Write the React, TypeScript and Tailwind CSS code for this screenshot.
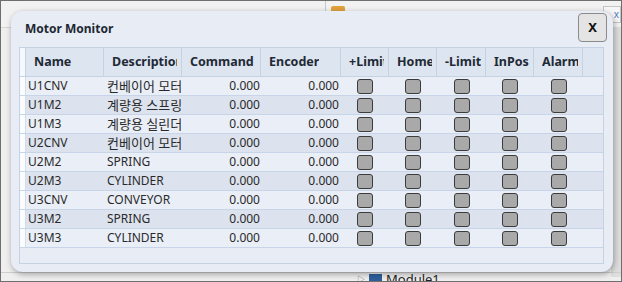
import React from "react";

type Motor = { name: string; desc: string; cmd: string; enc: string };

const motors: Motor[] = [
  { name: "U1CNV", desc: "컨베이어 모터", cmd: "0.000", enc: "0.000" },
  { name: "U1M2", desc: "계량용 스프링", cmd: "0.000", enc: "0.000" },
  { name: "U1M3", desc: "계량용 실린더", cmd: "0.000", enc: "0.000" },
  { name: "U2CNV", desc: "컨베이어 모터", cmd: "0.000", enc: "0.000" },
  { name: "U2M2", desc: "SPRING", cmd: "0.000", enc: "0.000" },
  { name: "U2M3", desc: "CYLINDER", cmd: "0.000", enc: "0.000" },
  { name: "U3CNV", desc: "CONVEYOR", cmd: "0.000", enc: "0.000" },
  { name: "U3M2", desc: "SPRING", cmd: "0.000", enc: "0.000" },
  { name: "U3M3", desc: "CYLINDER", cmd: "0.000", enc: "0.000" },
];

const headers = [
  { label: "Name", w: "w-[78px]" },
  { label: "Description", w: "w-[78px]" },
  { label: "Command", w: "w-[79px]" },
  { label: "Encoder", w: "w-[80px]" },
  { label: "+Limit", w: "w-[48px]" },
  { label: "Home", w: "w-[48px]" },
  { label: "-Limit", w: "w-[49px]" },
  { label: "InPos", w: "w-[48px]" },
  { label: "Alarm", w: "w-[49px]" },
];

const flagWidths = ["w-[48px]", "w-[48px]", "w-[49px]", "w-[48px]", "w-[49px]"];

const isHangul = (s: string) => /[가-힣]/.test(s);

const Lamp = () => (
  <div className="w-[16px] h-[15px] rounded-[3px] bg-[#a9a9a9] border border-[#3c3c3c]" />
);

const App = () => {
  return (
    <div
      className="relative w-[622px] h-[282px] overflow-hidden bg-[#efefef] border border-[#6e6e6e]"
      style={{ fontFamily: '"Noto Sans", "Noto Sans CJK KR", sans-serif' }}
    >
      {/* app behind the dialog */}
      <div className="absolute left-0 top-0 w-full h-[27px] bg-[#f2f2f2] border-b border-[#d4d4d4]" />
      <div className="absolute left-[324px] top-0 w-px h-[27px] bg-[#c8c8c8]" />
      <div className="absolute left-[330px] top-[5px] w-[14px] h-[6px] rounded-t-[2px] bg-[#e0a13a]" />
      <div className="absolute right-0 top-[5px] w-[18px] h-[17px] border border-[#c4c4c4] bg-[#f7f7f7] text-[10px] leading-[14px] text-[#4a7bc4] text-right pr-[1px]">
        x
      </div>
      <div className="absolute right-0 top-[26px] w-[10px] h-[250px] bg-[#dedede]" />
      <div className="absolute left-0 bottom-[8px] w-full h-px bg-[#cfcfcf]" />
      <div className="absolute left-[356px] top-[270px] flex items-center gap-[4px] text-[13px] leading-[16px] text-[#222]">
        <span className="text-[8px] text-[#777]">▷</span>
        <div className="w-[13px] h-[10px] bg-[#2f5f9c]" />
        <span>Module1</span>
      </div>

      {/* dialog */}
      <div className="absolute left-[10px] top-[10px] w-[602px] h-[261px] rounded-[12px] bg-[#e8edf5] shadow-[1px_2px_6px_rgba(0,0,0,0.35)] flex flex-col">
        <div className="h-[36px] flex justify-between">
          <div className="self-center pl-[14px] text-[12px] font-bold text-[#1d2733]">Motor Monitor</div>
          <button className="mt-[2px] mr-[6px] w-[29px] h-[29px] rounded-[4px] border border-[#8a8a8a] bg-[#e4e4e4] text-[13px] font-bold text-[#111] flex items-center justify-center">
            X
          </button>
        </div>

        <div className="ml-[8px] mr-[9px] h-[217px] border border-[#c5d2e4] flex flex-col text-[12px] text-[#2a2a2a]">
          {/* header */}
          <div className="flex h-[29px] bg-[#dde5f0] border-b border-[#c5d2e4]">
            <div className="w-[6px] bg-[#f5f8fc] border-r border-[#c5d2e4]" />
            {headers.map((h) => (
              <div
                key={h.label}
                className={`${h.w} shrink-0 border-r border-[#c5d2e4] pl-[8px] pr-[4px] flex items-center`}
              >
                <div className="min-w-0 overflow-hidden whitespace-nowrap font-bold text-[12.5px] text-[#1f2a36]">
                  {h.label}
                </div>
              </div>
            ))}
            <div className="flex-1" />
          </div>

          {/* rows */}
          {motors.map((m, i) => (
            <div
              key={m.name}
              className={`flex h-[19px] border-b border-[#c8d5e8] ${i % 2 === 0 ? "bg-[#e9eef7]" : "bg-[#dce3ee]"}`}
            >
              <div className="w-[6px] bg-[#fbfcfe] border-r border-[#d3dcea]" />
              <div className="w-[78px] shrink-0 pl-[2px] leading-[18px] whitespace-nowrap overflow-hidden">{m.name}</div>
              <div className="w-[78px] shrink-0 pl-[3px] pr-[1px]">
                <div
                  className={`overflow-hidden whitespace-nowrap leading-[18px] ${isHangul(m.desc) ? "text-[13px]" : ""}`}
                >
                  {m.desc}
                </div>
              </div>
              <div className="w-[79px] shrink-0 pr-[1px] text-right leading-[18px]">{m.cmd}</div>
              <div className="w-[80px] shrink-0 pr-[2px] text-right leading-[18px]">{m.enc}</div>
              {flagWidths.map((w, j) => (
                <div key={j} className={`${w} shrink-0 flex justify-center pt-[2px]`}>
                  <Lamp />
                </div>
              ))}
              <div className="flex-1" />
            </div>
          ))}
          <div className="flex-1" />
        </div>
      </div>
    </div>
  );
};

export default App;
